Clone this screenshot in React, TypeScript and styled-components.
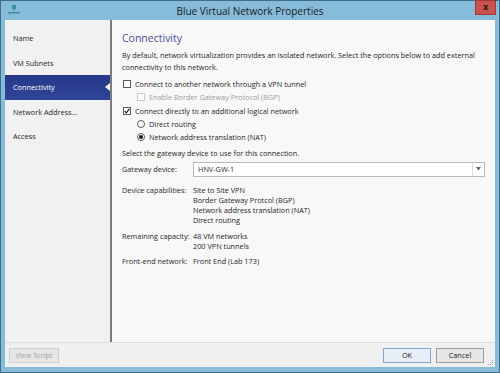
import React from 'react'
import styled, { createGlobalStyle } from 'styled-components'

const GlobalStyle = createGlobalStyle`
  html, body {
    margin: 0;
    padding: 0;
    background: #ffffff;
  }
  body {
    font-family: 'Open Sans', 'Noto Sans', sans-serif;
  }
`

const Window = styled.div`
  width: 500px;
  height: 373px;
  box-sizing: border-box;
  border: 1px solid #3d6f8a;
  background: #86bcda;
  display: flex;
  flex-direction: column;
  color: #1f1f1f;
`

const TitleBar = styled.div`
  height: 19px;
  flex: none;
  display: flex;
  align-items: center;
  justify-content: center;
  position: relative;
  font-size: 10px;
  color: #1a1a1a;
`

const TitleIcon = styled.svg`
  position: absolute;
  left: 7px;
  top: 4px;
`

const CloseButton = styled.div`
  position: absolute;
  right: 3px;
  top: -1px;
  width: 21px;
  height: 15px;
  background: #c9534c;
  border: 1px solid #9a3b35;
  box-sizing: border-box;
  display: flex;
  align-items: center;
  justify-content: center;
  font-family: 'DejaVu Sans', sans-serif;
  font-weight: bold;
  font-size: 8px;
  color: #1a1a1a;
`

const Body = styled.div`
  margin: 0 4px;
  height: 322px;
  flex: none;
  display: flex;
`

const Sidebar = styled.div`
  width: 105px;
  flex: none;
  background: #f1f1f1;
  border-right: 2px solid #7c7c7c;
  padding-top: 6px;
  box-sizing: content-box;
`

const NavItem = styled.div<{ active?: boolean }>`
  height: 24.5px;
  display: flex;
  align-items: center;
  padding-left: 8px;
  font-size: 7.3px;
  position: relative;
  color: ${({ active }) => (active ? '#ffffff' : '#1f1f1f')};
  background: ${({ active }) => (active ? 'linear-gradient(180deg, #28398a 0%, #2f4597 100%)' : 'transparent')};
`

const Notch = styled.div`
  position: absolute;
  right: 0;
  top: 8px;
  width: 0;
  height: 0;
  border-top: 4.5px solid transparent;
  border-bottom: 4.5px solid transparent;
  border-right: 5px solid #f8f8f8;
`

const Content = styled.div`
  flex: 1;
  background: #f8f8f8;
  padding: 10px 8px 0 10px;
  font-size: 7.3px;
`

const Heading = styled.div`
  font-size: 10.5px;
  line-height: 16px;
  color: #4a4c9c;
  margin-bottom: 4px;
`

const Para = styled.div`
  line-height: 11.7px;
  margin-bottom: 4px;
`

const OptionRow = styled.div<{ indent?: boolean; disabled?: boolean }>`
  height: 13.3px;
  display: flex;
  align-items: center;
  gap: 4px;
  padding-left: ${({ indent }) => (indent ? '15px' : '1px')};
  color: ${({ disabled }) => (disabled ? '#9c9c9c' : '#1f1f1f')};
`

const Box = styled.div<{ disabled?: boolean }>`
  width: 8px;
  height: 8px;
  box-sizing: border-box;
  border: 1px solid ${({ disabled }) => (disabled ? '#c8c8c8' : '#5a5a5a')};
  background: #ffffff;
  display: flex;
  align-items: center;
  justify-content: center;
`

const Radio = styled.div`
  width: 8px;
  height: 8px;
  box-sizing: border-box;
  border-radius: 50%;
  border: 1px solid #5a5a5a;
  background: #ffffff;
  display: flex;
  align-items: center;
  justify-content: center;
`

const Dot = styled.div`
  width: 4px;
  height: 4px;
  border-radius: 50%;
  background: #1a1a1a;
`

const Options = styled.div`
  margin-bottom: 4.5px;
`

const PlainLine = styled.div`
  line-height: 11.5px;
  margin-bottom: 2px;
`

const FieldRow = styled.div<{ gapTop?: number }>`
  display: flex;
  margin-top: ${({ gapTop }) => gapTop ?? 0}px;
`

const FieldLabel = styled.div<{ lh?: number }>`
  width: 71px;
  flex: none;
  line-height: ${({ lh }) => lh ?? 10}px;
`

const FieldValues = styled.div`
  display: flex;
  flex-direction: column;
`

const ValueLine = styled.div`
  line-height: 10px;
`

const Dropdown = styled.div`
  width: 292px;
  height: 15px;
  box-sizing: border-box;
  border: 1px solid #b9b9b9;
  background: #ffffff;
  display: flex;
  align-items: center;
`

const DropdownText = styled.div`
  flex: 1;
  padding-left: 4px;
`

const DropdownArrow = styled.div`
  width: 11px;
  height: 100%;
  border-left: 1px solid #dcdcdc;
  display: flex;
  align-items: center;
  justify-content: center;
`

const Footer = styled.div`
  margin: 0 4px;
  height: 25px;
  flex: none;
  box-sizing: border-box;
  background: #f0f0f0;
  border-top: 1px solid #dedede;
  display: flex;
  align-items: center;
  padding: 0 11px 0 4px;
  gap: 5px;
  position: relative;
`

const Button = styled.div<{ primary?: boolean; disabled?: boolean; w?: number }>`
  width: ${({ w }) => w ?? 48}px;
  height: 15px;
  box-sizing: border-box;
  border: 1px solid ${({ primary, disabled }) => (primary ? '#7fa6d6' : disabled ? '#cfcfcf' : '#9d9d9d')};
  background: ${({ primary }) => (primary ? '#e7eef7' : '#e6e6e6')};
  display: flex;
  align-items: center;
  justify-content: center;
  font-size: 7.3px;
  color: ${({ disabled }) => (disabled ? '#a3a3a3' : '#1f1f1f')};
`

const Spacer = styled.div`
  flex: 1;
`

const Grip = styled.svg`
  position: absolute;
  right: 1px;
  bottom: 1px;
`

const navItems = ['Name', 'VM Subnets', 'Connectivity', 'Network Address...', 'Access']

export default function App() {
  return (
    <>
      <GlobalStyle />
      <Window>
        <TitleBar>
          <TitleIcon width="12" height="10" viewBox="0 0 12 10">
            <rect x="4" y="0" width="4" height="4" fill="#3f8e9e" />
            <rect x="5.5" y="4" width="1" height="3" fill="#3f8e9e" />
            <rect x="0" y="7" width="12" height="1.5" fill="#3f8e9e" />
          </TitleIcon>
          Blue Virtual Network Properties
          <CloseButton>x</CloseButton>
        </TitleBar>
        <Body>
          <Sidebar>
            {navItems.map((item) => (
              <NavItem key={item} active={item === 'Connectivity'}>
                {item}
                {item === 'Connectivity' && <Notch />}
              </NavItem>
            ))}
          </Sidebar>
          <Content>
            <Heading>Connectivity</Heading>
            <Para>
              By default, network virtualization provides an isolated network. Select the options below to add external
              connectivity to this network.
            </Para>
            <Options>
              <OptionRow>
                <Box />
                Connect to another network through a VPN tunnel
              </OptionRow>
              <OptionRow indent disabled>
                <Box disabled />
                Enable Border Gateway Protocol (BGP)
              </OptionRow>
              <OptionRow>
                <Box>
                  <svg width="6" height="6" viewBox="0 0 6 6">
                    <path d="M0.6 3.2 L2.3 4.9 L5.4 0.8" stroke="#1a1a1a" strokeWidth="1.2" fill="none" />
                  </svg>
                </Box>
                Connect directly to an additional logical network
              </OptionRow>
              <OptionRow indent>
                <Radio />
                Direct routing
              </OptionRow>
              <OptionRow indent>
                <Radio>
                  <Dot />
                </Radio>
                Network address translation (NAT)
              </OptionRow>
            </Options>
            <PlainLine>Select the gateway device to use for this connection.</PlainLine>
            <FieldRow>
              <FieldLabel lh={15}>Gateway device:</FieldLabel>
              <Dropdown>
                <DropdownText>HNV-GW-1</DropdownText>
                <DropdownArrow>
                  <svg width="5" height="4" viewBox="0 0 5 4">
                    <path d="M0 0 H5 L2.5 3.5 Z" fill="#666" />
                  </svg>
                </DropdownArrow>
              </Dropdown>
            </FieldRow>
            <FieldRow gapTop={8}>
              <FieldLabel>Device capabilities:</FieldLabel>
              <FieldValues>
                <ValueLine>Site to Site VPN</ValueLine>
                <ValueLine>Border Gateway Protcol (BGP)</ValueLine>
                <ValueLine>Network address translation (NAT)</ValueLine>
                <ValueLine>Direct routing</ValueLine>
              </FieldValues>
            </FieldRow>
            <FieldRow gapTop={6}>
              <FieldLabel>Remaining capacity:</FieldLabel>
              <FieldValues>
                <ValueLine>48 VM networks</ValueLine>
                <ValueLine>200 VPN tunnels</ValueLine>
              </FieldValues>
            </FieldRow>
            <FieldRow gapTop={5}>
              <FieldLabel>Front-end network:</FieldLabel>
              <FieldValues>
                <ValueLine>Front End (Lab 173)</ValueLine>
              </FieldValues>
            </FieldRow>
          </Content>
        </Body>
        <Footer>
          <Button disabled w={50}>
            View Script
          </Button>
          <Spacer />
          <Button primary>OK</Button>
          <Button>Cancel</Button>
          <Grip width="6" height="6" viewBox="0 0 6 6">
            <rect x="4" y="0" width="1" height="1" fill="#a8a8a8" />
            <rect x="2" y="2" width="1" height="1" fill="#a8a8a8" />
            <rect x="4" y="2" width="1" height="1" fill="#a8a8a8" />
            <rect x="0" y="4" width="1" height="1" fill="#a8a8a8" />
            <rect x="2" y="4" width="1" height="1" fill="#a8a8a8" />
            <rect x="4" y="4" width="1" height="1" fill="#a8a8a8" />
          </Grip>
        </Footer>
      </Window>
    </>
  )
}
